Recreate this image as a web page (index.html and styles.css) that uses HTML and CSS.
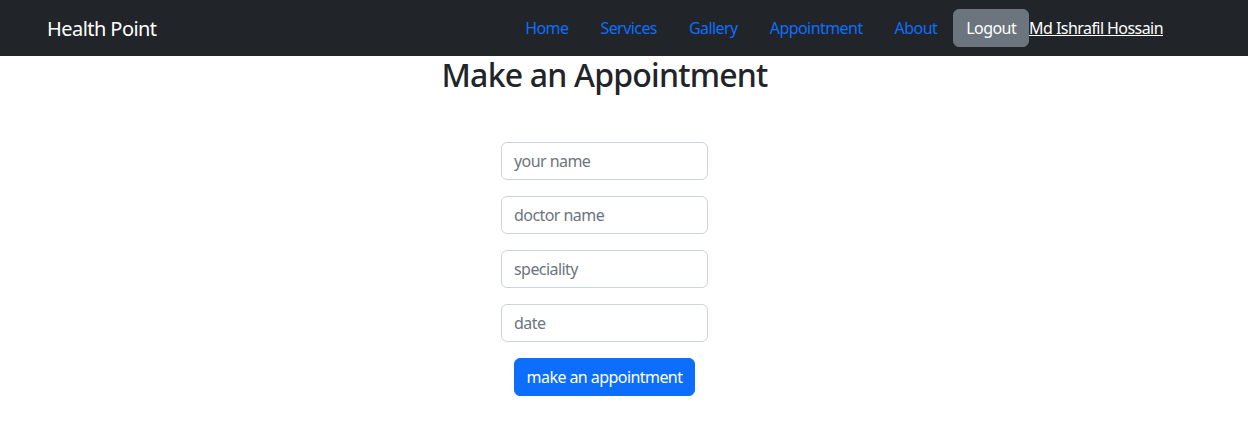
FILE: index.html
```html
<!DOCTYPE html>
<html lang="en">
<head>
<meta charset="utf-8">
<title>Health Point</title>
<link rel="stylesheet" href="styles.css">
</head>
<body>
<nav class="navbar">
  <a class="brand" href="#">Health Point</a>
  <div class="nav-right">
    <a class="nav-link" href="#">Home</a>
    <a class="nav-link" href="#">Services</a>
    <a class="nav-link" href="#">Gallery</a>
    <a class="nav-link" href="#">Appointment</a>
    <a class="nav-link" href="#">About</a>
    <button class="btn-logout">Logout</button>
    <a class="user-link" href="#">Md Ishrafil Hossain</a>
  </div>
</nav>
<main class="main">
  <h2 class="title">Make an Appointment</h2>
  <form class="form">
    <input class="field" type="text" placeholder="your name">
    <input class="field" type="text" placeholder="doctor name">
    <input class="field" type="text" placeholder="speciality">
    <input class="field" type="text" placeholder="date">
    <button class="btn-primary" type="button">make an appointment</button>
  </form>
</main>
</body>
</html>
```
FILE: styles.css
```css
* { box-sizing: border-box; }
body {
  margin: 0;
  font-family: "Noto Sans", "Open Sans", sans-serif;
  font-size: 16px;
  letter-spacing: -0.035em;
  color: #212529;
  background: #fff;
}
.navbar {
  height: 56px;
  background: #212529;
  display: flex;
  align-items: center;
  justify-content: space-between;
  padding: 0 85px 0 47px;
}
.brand {
  color: #fff;
  font-size: 20px;
  text-decoration: none;
}
.nav-right {
  display: flex;
  align-items: center;
}
.nav-link {
  color: #0d6efd;
  text-decoration: none;
  padding: 0 16px;
}
.btn-logout {
  font-family: inherit;
  font-size: 16px;
  letter-spacing: inherit;
  color: #fff;
  background: #6c757d;
  border: 1px solid #6c757d;
  border-radius: 6px;
  height: 38px;
  padding: 0 12px;
}
.user-link {
  color: #fff;
  text-decoration: underline;
}
.main {
  display: flex;
  flex-direction: column;
  align-items: center;
  padding-right: 39px;
}
.title {
  margin: 0;
  font-size: 32px;
  font-weight: 500;
  line-height: 1.2;
  letter-spacing: -0.025em;
  color: #212529;
}
.form {
  margin-top: 48px;
  display: flex;
  flex-direction: column;
  align-items: center;
  gap: 16px;
}
.field {
  width: 207px;
  height: 38px;
  padding: 6px 12px;
  border: 1px solid #ced4da;
  border-radius: 6px;
  font-family: inherit;
  font-size: 16px;
  letter-spacing: inherit;
  color: #212529;
}
.field::placeholder { color: #6c757d; }
.btn-primary {
  font-family: inherit;
  font-size: 16px;
  letter-spacing: inherit;
  color: #fff;
  background: #0d6efd;
  border: 1px solid #0d6efd;
  border-radius: 6px;
  height: 38px;
  padding: 0 12px;
}
```
